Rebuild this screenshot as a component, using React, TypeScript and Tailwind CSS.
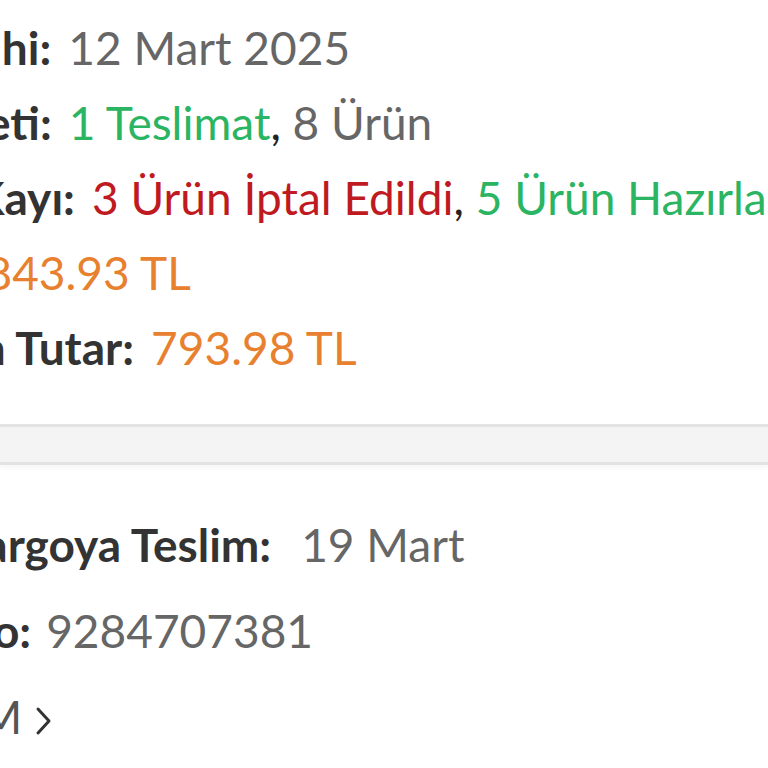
import { ReactNode } from 'react'

type RowProps = {
  label: string
  children: ReactNode
  gap?: string
}

function Row({ label, children, gap = 'ml-[17px]' }: RowProps) {
  return (
    <div className="flex items-baseline whitespace-nowrap">
      <span className="font-bold text-[#333333]">{label}</span>
      <span className={gap}>{children}</span>
    </div>
  )
}

function Comma() {
  return <span className="text-[#222222]">, </span>
}

export default function App() {
  return (
    <main className="w-[768px] h-[768px] overflow-hidden bg-white font-['Lato','Noto_Sans',sans-serif] text-[46px] text-[#666666]">
      <section className="-ml-[218px] pt-[10px] pb-[39px] leading-[75px]">
        <Row label="Sipariş Tarihi:">12 Mart 2025</Row>
        <Row label="Sipariş Özeti:">
          <span className="text-[#2bb462]">1 Teslimat</span>
          <Comma />8 Ürün
        </Row>
        <Row label="Sipariş İş Kayı:">
          <span className="text-[#bf1a1f]">3 Ürün İptal Edildi</span>
          <Comma />
          <span className="text-[#2bb462]">5 Ürün Hazırlanıyor</span>
        </Row>
        <Row label="Toplam:">
          <span className="text-[#e8812f]">1843.93 TL</span>
        </Row>
        <Row label="İade Edilen Tutar:">
          <span className="text-[#e8812f]">793.98 TL</span>
        </Row>
      </section>

      <div className="h-[41px] border-y-[3px] border-[#e3e3e3] bg-[#f4f4f4] shadow-[0_3px_5px_rgba(0,0,0,0.04)]" />

      <section className="-ml-[218px] pt-[37px] leading-[86px]">
        <Row label="Tahmini Kargoya Teslim:" gap="ml-[30px]">
          19 Mart
        </Row>
        <Row label="Gönderi No:" gap="ml-[15px]">
          9284707381
        </Row>
        <div className="flex items-center gap-[13px] whitespace-nowrap">
          <span className="text-[#555555]">İADELERİM</span>
          <svg width="18" height="30" viewBox="0 0 18 30" fill="none" className="mt-[8px]">
            <polyline points="3,3 14,15 3,27" stroke="#333333" strokeWidth="3" strokeLinecap="round" strokeLinejoin="round" />
          </svg>
        </div>
      </section>
    </main>
  )
}
